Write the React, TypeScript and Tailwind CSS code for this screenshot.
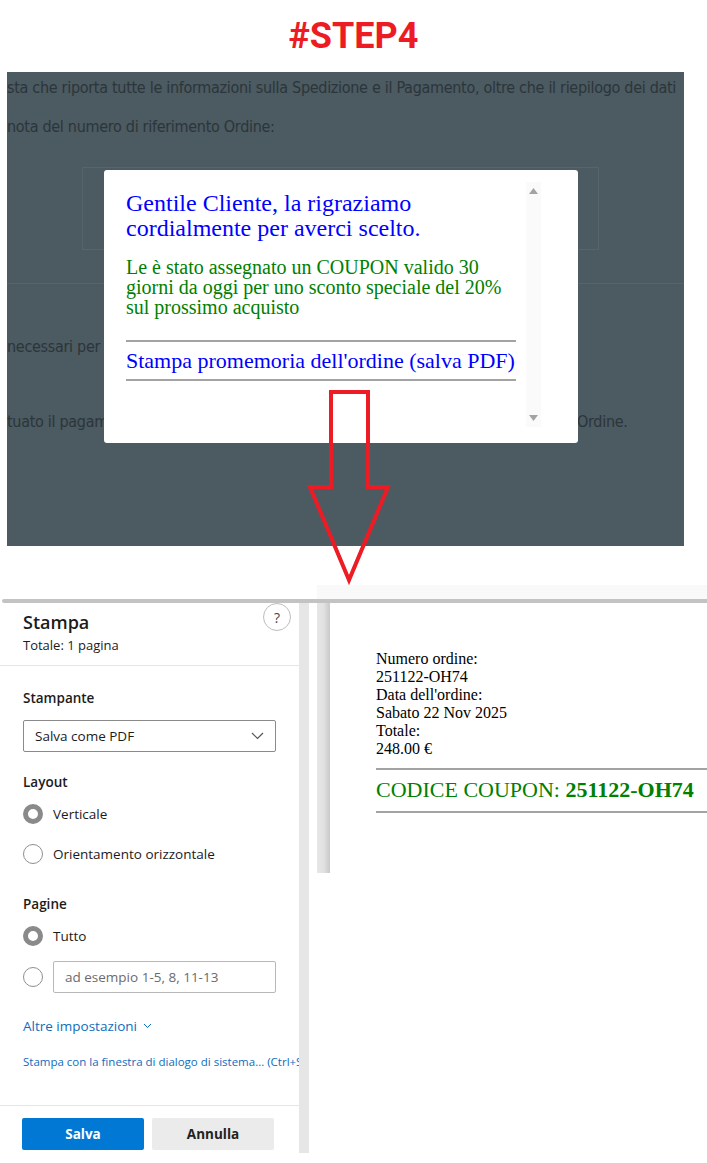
import React from 'react'

const sans = { fontFamily: '"Open Sans", "Noto Sans", sans-serif' }

const Radio = ({ checked }: { checked?: boolean }) =>
  checked ? (
    <span className="block w-[20px] h-[20px] rounded-full border-[5px] border-[#8a8a8a] bg-white shrink-0" />
  ) : (
    <span className="block w-[20px] h-[20px] rounded-full border border-[#8f8f8f] bg-white shrink-0" />
  )

const Overlay: React.FC = () => {
  return (
    <div className="relative ml-[7px] w-[677px] h-[474px] bg-[#4c5a61] overflow-hidden text-[#2b353a] text-[16px] font-['Liberation_Sans_Narrow','DejaVu_Sans_Condensed',Roboto,sans-serif] tracking-[-0.3px]">
      <div className="pt-[4px] leading-[24px] whitespace-nowrap">
        sta che riporta tutte le informazioni sulla Spedizione e il Pagamento, oltre che il riepilogo dei dati
      </div>
      <div className="mt-[15px] leading-[24px] whitespace-nowrap">nota del numero di riferimento Ordine:</div>
      <div className="mt-[28px] ml-[75px] w-[517px] h-[83px] border border-[#56646b]" />
      <div className="mt-[33px] h-px bg-[#56646b]" />
      <div className="mt-[51px] w-[97px] overflow-hidden leading-[24px] whitespace-nowrap">necessari per il</div>
      <div className="mt-[51px] flex leading-[24px] whitespace-nowrap">
        <div className="w-[97px] overflow-hidden">tuato il pagamento</div>
        <div className="w-[473px]" />
        <div>Ordine.</div>
      </div>

      {/* modal */}
      <div className="absolute left-[97px] top-[98px] w-[474px] h-[273px] bg-white rounded-[3px] flex font-['Liberation_Serif',serif] tracking-normal">
        <div className="pl-[22px] pt-[21px] w-[412px]">
          <div className="text-[24px] leading-[25px] text-[#0000ff] whitespace-nowrap">
            Gentile Cliente, la rigraziamo
            <br />
            cordialmente per averci scelto.
          </div>
          <div className="mt-[16px] text-[20px] leading-[20px] text-[#008000] whitespace-nowrap">
            Le è stato assegnato un COUPON valido 30
            <br />
            giorni da oggi per uno sconto speciale del 20%
            <br />
            sul prossimo acquisto
          </div>
          <div className="mt-[23px] h-[2px] bg-[#a3a3a3]" />
          <div className="mt-[6px] text-[22px] leading-[25px] text-[#0000ff] whitespace-nowrap">
            Stampa promemoria dell'ordine (salva PDF)
          </div>
          <div className="mt-[6px] h-[2px] bg-[#a3a3a3]" />
        </div>
        <div className="ml-[10px] mt-[12px] w-[15px] h-[245px] bg-[#fafafa] flex flex-col items-center justify-between py-[6px]">
          <svg width="9" height="6" viewBox="0 0 9 6">
            <path d="M4.5 0 L9 6 L0 6 Z" fill="#a3a3a3" />
          </svg>
          <svg width="9" height="6" viewBox="0 0 9 6">
            <path d="M0 0 L9 0 L4.5 6 Z" fill="#a3a3a3" />
          </svg>
        </div>
      </div>
    </div>
  )
}

const PrintPanel: React.FC = () => {
  return (
    <div className="relative w-[299px] h-[550px] bg-white overflow-hidden text-[#1b1b1b]" style={sans}>
      <div className="h-[62px] flex justify-between pl-[23px] pr-[8px]">
        <div className="pt-[7px]">
          <div className="text-[18px] leading-[24px] font-semibold">Stampa</div>
          <div className="text-[13px] leading-[22px]">Totale: 1 pagina</div>
        </div>
        <div className="w-[28px] h-[28px] rounded-full border border-[#bdbdbd] flex items-center justify-center text-[14px] text-[#444]">
          ?
        </div>
      </div>
      <div className="h-px bg-[#e5e5e5]" />
      <div className="px-[23px] text-[13.5px]">
        <div className="mt-[22px] leading-[20px] font-semibold">Stampante</div>
        <div className="mt-[12px] h-[32px] border border-[#8a8a8a] rounded-[2px] flex items-center justify-between pl-[11px] pr-[11px]">
          <span>Salva come PDF</span>
          <svg width="13" height="8" viewBox="0 0 13 8">
            <path d="M1 1 L6.5 6.5 L12 1" fill="none" stroke="#555" strokeWidth="1.2" />
          </svg>
        </div>
        <div className="mt-[20px] leading-[20px] font-semibold">Layout</div>
        <div className="mt-[12px] h-[20px] flex items-center gap-[10px]">
          <Radio checked />
          <span>Verticale</span>
        </div>
        <div className="mt-[20px] h-[20px] flex items-center gap-[10px]">
          <Radio />
          <span>Orientamento orizzontale</span>
        </div>
        <div className="mt-[30px] leading-[20px] font-semibold">Pagine</div>
        <div className="mt-[12px] h-[20px] flex items-center gap-[10px]">
          <Radio checked />
          <span>Tutto</span>
        </div>
        <div className="mt-[15px] h-[32px] flex items-center gap-[10px]">
          <Radio />
          <div className="flex-1 h-[32px] border border-[#b8b8b8] rounded-[2px] flex items-center pl-[11px] text-[#6b6b6b]">
            ad esempio 1-5, 8, 11-13
          </div>
        </div>
        <div className="mt-[23px] leading-[20px] text-[#0f6cbd] flex items-center gap-[6px]">
          <span>Altre impostazioni</span>
          <svg width="9" height="6" viewBox="0 0 9 6">
            <path d="M1 1 L4.5 4.5 L8 1" fill="none" stroke="#0f6cbd" strokeWidth="1" />
          </svg>
        </div>
        <div className="mt-[17px] w-[276px] overflow-hidden leading-[18px] text-[11.5px] text-[#0f6cbd] whitespace-nowrap">
          Stampa con la finestra di dialogo di sistema... (Ctrl+S
        </div>
      </div>
      <div className="mt-[34px] h-px bg-[#e5e5e5]" />
      <div className="mt-[12px] ml-[22px] flex gap-[8px] text-[13.5px] font-bold">
        <button className="w-[122px] h-[32px] rounded-[2px] bg-[#0078d4] text-white">Salva</button>
        <button className="w-[122px] h-[32px] rounded-[2px] bg-[#ebebeb] text-[#222]">Annulla</button>
      </div>
    </div>
  )
}

const PrintPreview: React.FC = () => {
  return (
    <div className="flex-1 pl-[46px] font-['Liberation_Serif',serif] text-black overflow-hidden">
      <div className="pt-[47px] text-[16px] leading-[18px]">
        <div>Numero ordine:</div>
        <div>251122-OH74</div>
        <div>Data dell'ordine:</div>
        <div>Sabato 22 Nov 2025</div>
        <div>Totale:</div>
        <div>248.00 €</div>
      </div>
      <div className="mt-[10px] h-[2px] bg-[#a3a3a3]" />
      <div className="mt-[8px] text-[22px] leading-[24px] text-[#008000] whitespace-nowrap">
        CODICE COUPON: <b>251122-OH74</b>
      </div>
      <div className="mt-[9px] h-[2px] bg-[#a3a3a3]" />
    </div>
  )
}

export default function App() {
  return (
    <div className="relative w-[707px] h-[1163px] bg-white overflow-hidden">
      <div className="h-[72px] flex items-center justify-center">
        <h1 className="text-[36px] font-bold text-[#ed1c24] font-['Roboto',sans-serif] leading-none">#STEP4</h1>
      </div>
      <Overlay />

      <div className="mt-[39px] flex h-[14px]">
        <div className="w-[317px]" />
        <div className="flex-1 bg-[#f9f9f9]" />
      </div>
      <div className="ml-[2px] h-[4px] rounded-l-full bg-[#c3c3c3]" />
      <div className="flex h-[550px]">
        <PrintPanel />
        <div className="w-[10px] h-[550px] bg-[#e6e6e6]" />
        <div className="w-[8px]" />
        <div className="w-[13px] h-[270px] bg-linear-to-r from-[#e6e6e6] via-[#e2e2e2] to-[#c9c9c9]" />
        <PrintPreview />
      </div>

      {/* red arrow */}
      <svg className="absolute left-0 top-0 pointer-events-none" width="707" height="1163" viewBox="0 0 707 1163">
        <path
          d="M331 392 L368 392 L368 487 L388 487 L349 580 L310 487 L331 487 Z"
          fill="none"
          stroke="#ed1c24"
          strokeWidth="4"
          strokeLinejoin="miter"
        />
      </svg>
    </div>
  )
}
